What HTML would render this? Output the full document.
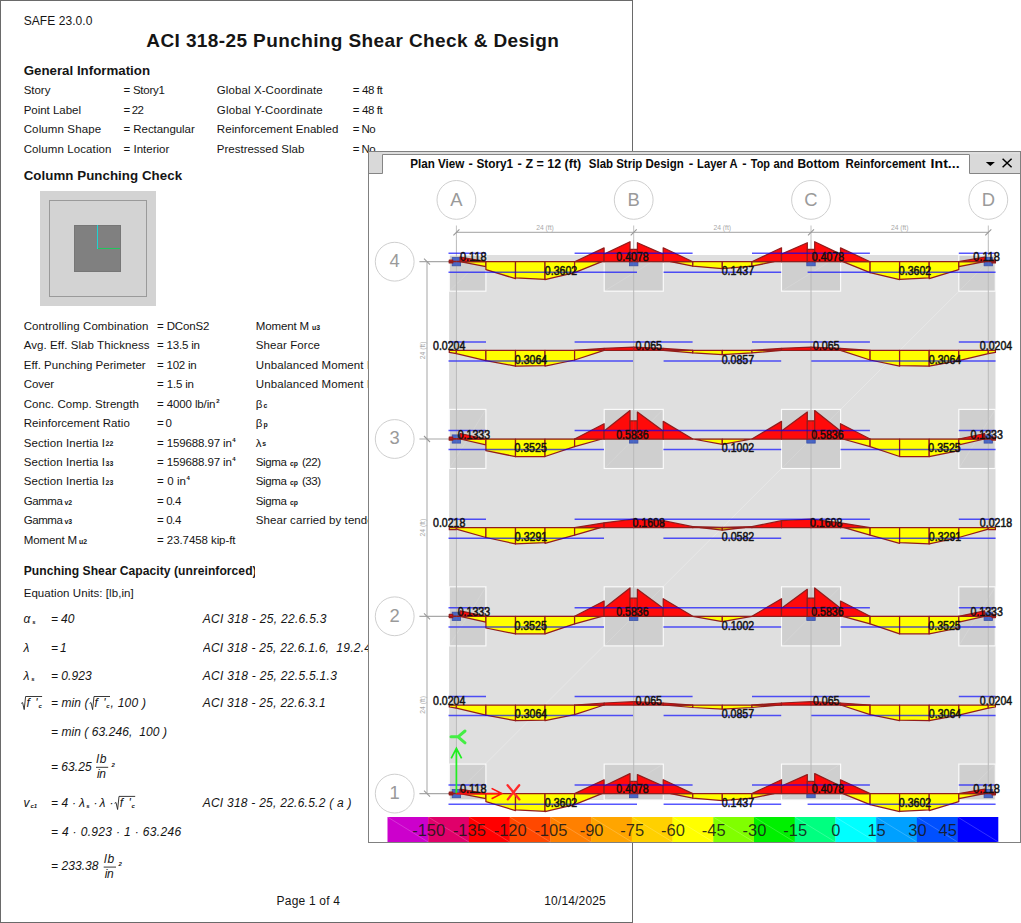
<!DOCTYPE html>
<html lang="en"><head><meta charset="utf-8"><title>ACI 318-25 Punching Shear Check &amp; Design</title>
<style>
html,body{margin:0;padding:0;background:#fff;}
body{width:1021px;height:923px;position:relative;overflow:hidden;font-family:"Liberation Sans", sans-serif;color:#111;}
#page{position:absolute;left:0;top:0;width:631px;height:921px;border:1px solid #6a6a6a;background:#fff;}
.t{position:absolute;white-space:pre;color:#151515;}
.abs{position:absolute;}
#win{position:absolute;left:368px;top:151px;width:651px;height:690px;border:1px solid #808080;background:#fff;}
svg{position:absolute;left:0;top:0;}
</style></head><body>
<div id="page"></div>
<div id="report" class="abs" style="left:0;top:0;width:633px;height:923px;">
<!-- column sketch -->
<div class="abs" style="left:40px;top:190.6px;width:115.6px;height:115.3px;background:#d3d3d3;"></div>
<div class="abs" style="left:48.6px;top:199.5px;width:98px;height:97.5px;border:1px solid #9a9a9a;box-sizing:border-box;"></div>
<div class="abs" style="left:74.4px;top:225.2px;width:46.6px;height:46.8px;background:#808080;border:1px solid #767676;box-sizing:border-box;"></div>
<div class="abs" style="left:97.3px;top:225.2px;width:1.2px;height:23.6px;background:#1fd3d3;"></div>
<div class="abs" style="left:97.8px;top:248px;width:22.2px;height:1.2px;background:#22c55e;"></div>
<span class="t" style="left:23.70px;top:14.24px;font-size:12px;line-height:15.6px;letter-spacing:0.065px;">SAFE 23.0.0</span>
<span class="t" style="left:146.30px;top:28.97px;font-size:19px;line-height:24.7px;font-weight:bold;letter-spacing:0.397px;">ACI 318-25 Punching Shear Check &amp; Design</span>
<span class="t" style="left:23.70px;top:62.05px;font-size:13.3px;line-height:17.29px;font-weight:bold;">General Information</span>
<span class="t" style="left:23.70px;top:83.14px;font-size:11.5px;line-height:14.95px;letter-spacing:-0.036px;">Story</span>
<span class="t" style="left:123.50px;top:83.14px;font-size:11.5px;line-height:14.95px;letter-spacing:-0.237px;">= Story1</span>
<span class="t" style="left:216.80px;top:83.14px;font-size:11.5px;line-height:14.95px;letter-spacing:0.094px;">Global X-Coordinate</span>
<span class="t" style="left:352.80px;top:83.14px;font-size:11.5px;line-height:14.95px;letter-spacing:-0.383px;">= 48 ft</span>
<span class="t" style="left:23.70px;top:102.64px;font-size:11.5px;line-height:14.95px;letter-spacing:-0.025px;">Point Label</span>
<span class="t" style="left:123.50px;top:102.64px;font-size:11.5px;line-height:14.95px;letter-spacing:-0.768px;">= 22</span>
<span class="t" style="left:216.80px;top:102.64px;font-size:11.5px;line-height:14.95px;letter-spacing:0.165px;">Global Y-Coordinate</span>
<span class="t" style="left:352.80px;top:102.64px;font-size:11.5px;line-height:14.95px;letter-spacing:-0.383px;">= 48 ft</span>
<span class="t" style="left:23.70px;top:122.14px;font-size:11.5px;line-height:14.95px;letter-spacing:0.120px;">Column Shape</span>
<span class="t" style="left:123.50px;top:122.14px;font-size:11.5px;line-height:14.95px;letter-spacing:-0.052px;">= Rectangular</span>
<span class="t" style="left:216.80px;top:122.14px;font-size:11.5px;line-height:14.95px;letter-spacing:0.066px;">Reinforcement Enabled</span>
<span class="t" style="left:352.80px;top:122.14px;font-size:11.5px;line-height:14.95px;letter-spacing:-0.575px;">= No</span>
<span class="t" style="left:23.70px;top:141.54px;font-size:11.5px;line-height:14.95px;letter-spacing:0.106px;">Column Location</span>
<span class="t" style="left:123.50px;top:141.54px;font-size:11.5px;line-height:14.95px;letter-spacing:0.011px;">= Interior</span>
<span class="t" style="left:216.80px;top:141.54px;font-size:11.5px;line-height:14.95px;">Prestressed Slab</span>
<span class="t" style="left:352.80px;top:141.54px;font-size:11.5px;line-height:14.95px;letter-spacing:-0.575px;">= No</span>
<span class="t" style="left:23.70px;top:167.35px;font-size:13.3px;line-height:17.29px;font-weight:bold;letter-spacing:0.052px;">Column Punching Check</span>
<span class="t" style="left:23.70px;top:318.84px;font-size:11.5px;line-height:14.95px;letter-spacing:0.094px;">Controlling Combination</span>
<span class="t" style="left:157.10px;top:318.84px;font-size:11.5px;line-height:14.95px;letter-spacing:-0.170px;">= DConS2</span>
<span class="t" style="left:23.70px;top:338.29px;font-size:11.5px;line-height:14.95px;letter-spacing:0.078px;">Avg. Eff. Slab Thickness</span>
<span class="t" style="left:157.10px;top:338.29px;font-size:11.5px;line-height:14.95px;letter-spacing:-0.207px;">= 13.5 in</span>
<span class="t" style="left:23.70px;top:357.74px;font-size:11.5px;line-height:14.95px;letter-spacing:0.034px;">Eff. Punching Perimeter</span>
<span class="t" style="left:157.10px;top:357.74px;font-size:11.5px;line-height:14.95px;letter-spacing:-0.250px;">= 102 in</span>
<span class="t" style="left:23.70px;top:377.19px;font-size:11.5px;line-height:14.95px;letter-spacing:-0.047px;">Cover</span>
<span class="t" style="left:157.10px;top:377.19px;font-size:11.5px;line-height:14.95px;letter-spacing:-0.164px;">= 1.5 in</span>
<span class="t" style="left:23.70px;top:396.64px;font-size:11.5px;line-height:14.95px;letter-spacing:0.080px;">Conc. Comp. Strength</span>
<span class="t" style="left:157.10px;top:396.64px;font-size:11.5px;line-height:14.95px;letter-spacing:-0.127px;">= 4000 lb/in</span>
<span class="t" style="left:23.70px;top:416.09px;font-size:11.5px;line-height:14.95px;letter-spacing:0.076px;">Reinforcement Ratio</span>
<span class="t" style="left:157.10px;top:416.09px;font-size:11.5px;line-height:14.95px;letter-spacing:-0.756px;">= 0</span>
<span class="t" style="left:23.70px;top:435.54px;font-size:11.5px;line-height:14.95px;letter-spacing:0.087px;">Section Inertia I</span>
<span class="t" style="left:105.60px;top:440.42px;font-size:6.9px;line-height:8.97px;font-weight:bold;">22</span>
<span class="t" style="left:157.10px;top:435.54px;font-size:11.5px;line-height:14.95px;letter-spacing:-0.132px;">= 159688.97 in</span>
<span class="t" style="left:23.70px;top:454.99px;font-size:11.5px;line-height:14.95px;letter-spacing:0.087px;">Section Inertia I</span>
<span class="t" style="left:105.60px;top:459.87px;font-size:6.9px;line-height:8.97px;font-weight:bold;">33</span>
<span class="t" style="left:157.10px;top:454.99px;font-size:11.5px;line-height:14.95px;letter-spacing:-0.132px;">= 159688.97 in</span>
<span class="t" style="left:23.70px;top:474.44px;font-size:11.5px;line-height:14.95px;letter-spacing:0.087px;">Section Inertia I</span>
<span class="t" style="left:105.60px;top:479.32px;font-size:6.9px;line-height:8.97px;font-weight:bold;">23</span>
<span class="t" style="left:157.10px;top:474.44px;font-size:11.5px;line-height:14.95px;letter-spacing:0.089px;">= 0 in</span>
<span class="t" style="left:23.70px;top:493.89px;font-size:11.5px;line-height:14.95px;letter-spacing:-0.427px;">Gamma</span>
<span class="t" style="left:64.50px;top:498.77px;font-size:6.9px;line-height:8.97px;font-weight:bold;">v2</span>
<span class="t" style="left:157.10px;top:493.89px;font-size:11.5px;line-height:14.95px;letter-spacing:-0.427px;">= 0.4</span>
<span class="t" style="left:23.70px;top:513.34px;font-size:11.5px;line-height:14.95px;letter-spacing:-0.427px;">Gamma</span>
<span class="t" style="left:64.50px;top:518.22px;font-size:6.9px;line-height:8.97px;font-weight:bold;">v3</span>
<span class="t" style="left:157.10px;top:513.34px;font-size:11.5px;line-height:14.95px;letter-spacing:-0.427px;">= 0.4</span>
<span class="t" style="left:23.70px;top:532.79px;font-size:11.5px;line-height:14.95px;letter-spacing:-0.118px;">Moment M</span>
<span class="t" style="left:79.00px;top:537.67px;font-size:6.9px;line-height:8.97px;font-weight:bold;">u2</span>
<span class="t" style="left:157.10px;top:532.79px;font-size:11.5px;line-height:14.95px;letter-spacing:-0.081px;">= 23.7458 kip-ft</span>
<span class="t" style="left:216.20px;top:397.62px;font-size:6px;line-height:7.8px;font-weight:bold;letter-spacing:-0.044px;">2</span>
<span class="t" style="left:232.30px;top:436.52px;font-size:6px;line-height:7.8px;font-weight:bold;letter-spacing:-0.144px;">4</span>
<span class="t" style="left:232.30px;top:455.97px;font-size:6px;line-height:7.8px;font-weight:bold;letter-spacing:-0.144px;">4</span>
<span class="t" style="left:186.50px;top:475.42px;font-size:6px;line-height:7.8px;font-weight:bold;letter-spacing:-0.144px;">4</span>
<span class="t" style="left:255.80px;top:318.84px;font-size:11.5px;line-height:14.95px;letter-spacing:-0.133px;">Moment M</span>
<span class="t" style="left:312.00px;top:323.72px;font-size:6.9px;line-height:8.97px;font-weight:bold;">u3</span>
<span class="t" style="left:255.80px;top:338.29px;font-size:11.5px;line-height:14.95px;letter-spacing:0.092px;">Shear Force</span>
<span class="t" style="left:255.80px;top:357.74px;font-size:11.5px;line-height:14.95px;letter-spacing:0.100px;width:112.20px;overflow:hidden;">Unbalanced Moment M</span>
<span class="t" style="left:255.80px;top:377.19px;font-size:11.5px;line-height:14.95px;letter-spacing:0.100px;width:112.20px;overflow:hidden;">Unbalanced Moment M</span>
<span class="t" style="left:255.80px;top:396.64px;font-size:11.5px;line-height:14.95px;letter-spacing:-0.425px;">β</span>
<span class="t" style="left:263.50px;top:401.52px;font-size:6.9px;line-height:8.97px;font-weight:bold;letter-spacing:-0.344px;">c</span>
<span class="t" style="left:255.80px;top:416.09px;font-size:11.5px;line-height:14.95px;letter-spacing:-0.425px;">β</span>
<span class="t" style="left:263.50px;top:420.97px;font-size:6.9px;line-height:8.97px;font-weight:bold;letter-spacing:-0.419px;">p</span>
<span class="t" style="left:255.80px;top:435.54px;font-size:11.5px;line-height:14.95px;letter-spacing:-0.050px;">λ</span>
<span class="t" style="left:262.30px;top:440.42px;font-size:6.9px;line-height:8.97px;font-weight:bold;letter-spacing:-0.344px;">s</span>
<span class="t" style="left:255.80px;top:454.99px;font-size:11.5px;line-height:14.95px;letter-spacing:-0.352px;">Sigma</span>
<span class="t" style="left:290.00px;top:459.87px;font-size:6.9px;line-height:8.97px;font-weight:bold;">cp</span>
<span class="t" style="left:302.00px;top:454.99px;font-size:11.5px;line-height:14.95px;letter-spacing:-0.484px;">(22)</span>
<span class="t" style="left:255.80px;top:474.44px;font-size:11.5px;line-height:14.95px;letter-spacing:-0.352px;">Sigma</span>
<span class="t" style="left:290.00px;top:479.32px;font-size:6.9px;line-height:8.97px;font-weight:bold;">cp</span>
<span class="t" style="left:302.00px;top:474.44px;font-size:11.5px;line-height:14.95px;letter-spacing:-0.484px;">(33)</span>
<span class="t" style="left:255.80px;top:493.89px;font-size:11.5px;line-height:14.95px;letter-spacing:-0.352px;">Sigma</span>
<span class="t" style="left:290.00px;top:498.77px;font-size:6.9px;line-height:8.97px;font-weight:bold;">cp</span>
<span class="t" style="left:255.80px;top:513.34px;font-size:11.5px;line-height:14.95px;letter-spacing:0.074px;width:112.20px;overflow:hidden;">Shear carried by tendons</span>
<span class="t" style="left:23.70px;top:564.04px;font-size:12.1px;line-height:15.73px;font-weight:bold;letter-spacing:0.047px;width:231.50px;overflow:hidden;">Punching Shear Capacity (unreinforced)</span>
<span class="t" style="left:23.70px;top:586.24px;font-size:11.5px;line-height:14.95px;letter-spacing:0.060px;">Equation Units: [lb,in]</span>
<span class="t" style="left:23.50px;top:612.24px;font-size:12px;line-height:15.6px;font-style:italic;letter-spacing:0.156px;">α</span>
<span class="t" style="left:32.30px;top:618.72px;font-size:6px;line-height:7.8px;font-weight:bold;font-style:italic;letter-spacing:-0.444px;">s</span>
<span class="t" style="left:50.90px;top:612.24px;font-size:12px;line-height:15.6px;font-style:italic;letter-spacing:-0.068px;">= 40</span>
<span class="t" style="left:23.50px;top:641.14px;font-size:12px;line-height:15.6px;font-style:italic;letter-spacing:0.094px;">λ</span>
<span class="t" style="left:50.90px;top:641.14px;font-size:12px;line-height:15.6px;font-style:italic;letter-spacing:-0.658px;">= 1</span>
<span class="t" style="left:23.50px;top:669.04px;font-size:12px;line-height:15.6px;font-style:italic;letter-spacing:0.094px;">λ</span>
<span class="t" style="left:31.30px;top:675.52px;font-size:6px;line-height:7.8px;font-weight:bold;font-style:italic;letter-spacing:-0.444px;">s</span>
<span class="t" style="left:50.90px;top:669.04px;font-size:12px;line-height:15.6px;font-style:italic;letter-spacing:0.071px;">= 0.923</span>
<span class="t" style="left:26.60px;top:696.44px;font-size:12px;line-height:15.6px;font-style:italic;letter-spacing:1.016px;">f '</span>
<span class="t" style="left:38.60px;top:702.92px;font-size:6px;line-height:7.8px;font-weight:bold;font-style:italic;letter-spacing:-0.344px;">c</span>
<span class="t" style="left:50.90px;top:696.44px;font-size:12px;line-height:15.6px;font-style:italic;letter-spacing:0.097px;">= min (</span>
<span class="t" style="left:94.50px;top:696.44px;font-size:12px;line-height:15.6px;font-style:italic;letter-spacing:1.016px;">f '</span>
<span class="t" style="left:106.30px;top:702.92px;font-size:6px;line-height:7.8px;font-weight:bold;font-style:italic;letter-spacing:-0.344px;">c</span>
<span class="t" style="left:110.50px;top:696.44px;font-size:12px;line-height:15.6px;font-style:italic;letter-spacing:0.245px;">, 100 )</span>
<span class="t" style="left:50.90px;top:724.84px;font-size:12px;line-height:15.6px;font-style:italic;letter-spacing:0.076px;">= min ( 63.246,  100 )</span>
<span class="t" style="left:50.90px;top:759.54px;font-size:12px;line-height:15.6px;font-style:italic;letter-spacing:0.071px;">= 63.25</span>
<span class="t" style="left:96.30px;top:751.84px;font-size:12px;line-height:15.6px;font-style:italic;letter-spacing:0.856px;">lb</span>
<span class="t" style="left:97.00px;top:766.94px;font-size:12px;line-height:15.6px;font-style:italic;letter-spacing:-0.344px;">in</span>
<span class="t" style="left:111.50px;top:761.52px;font-size:6px;line-height:7.8px;font-weight:bold;font-style:italic;letter-spacing:-0.244px;">2</span>
<span class="t" style="left:23.50px;top:796.34px;font-size:12px;line-height:15.6px;font-style:italic;letter-spacing:-0.200px;">v</span>
<span class="t" style="left:30.50px;top:802.82px;font-size:6px;line-height:7.8px;font-weight:bold;font-style:italic;">c1</span>
<span class="t" style="left:50.90px;top:796.34px;font-size:12px;line-height:15.6px;font-style:italic;letter-spacing:0.185px;">= 4 ·</span>
<span class="t" style="left:79.00px;top:796.34px;font-size:12px;line-height:15.6px;font-style:italic;letter-spacing:0.094px;">λ</span>
<span class="t" style="left:86.30px;top:802.82px;font-size:6px;line-height:7.8px;font-weight:bold;font-style:italic;letter-spacing:-0.444px;">s</span>
<span class="t" style="left:93.50px;top:796.34px;font-size:12px;line-height:15.6px;font-style:italic;letter-spacing:-1.500px;">·</span>
<span class="t" style="left:99.50px;top:796.34px;font-size:12px;line-height:15.6px;font-style:italic;letter-spacing:0.094px;">λ</span>
<span class="t" style="left:109.50px;top:796.34px;font-size:12px;line-height:15.6px;font-style:italic;letter-spacing:-1.500px;">·</span>
<span class="t" style="left:119.80px;top:796.34px;font-size:12px;line-height:15.6px;font-style:italic;letter-spacing:1.016px;">f '</span>
<span class="t" style="left:131.60px;top:802.82px;font-size:6px;line-height:7.8px;font-weight:bold;font-style:italic;letter-spacing:-0.344px;">c</span>
<span class="t" style="left:50.90px;top:825.34px;font-size:12px;line-height:15.6px;font-style:italic;letter-spacing:0.343px;">= 4 · 0.923 · 1 · 63.246</span>
<span class="t" style="left:50.90px;top:859.04px;font-size:12px;line-height:15.6px;font-style:italic;letter-spacing:0.079px;">= 233.38</span>
<span class="t" style="left:104.00px;top:851.74px;font-size:12px;line-height:15.6px;font-style:italic;letter-spacing:0.856px;">lb</span>
<span class="t" style="left:104.70px;top:867.04px;font-size:12px;line-height:15.6px;font-style:italic;letter-spacing:-0.344px;">in</span>
<span class="t" style="left:118.40px;top:861.32px;font-size:6px;line-height:7.8px;font-weight:bold;font-style:italic;letter-spacing:-0.244px;">2</span>
<span class="t" style="left:202.70px;top:612.24px;font-size:12px;line-height:15.6px;font-style:italic;letter-spacing:0.304px;">ACI 318 - 25, 22.6.5.3</span>
<span class="t" style="left:202.70px;top:641.14px;font-size:12px;line-height:15.6px;font-style:italic;letter-spacing:0.250px;width:165.30px;overflow:hidden;">ACI 318 - 25, 22.6.1.6,  19.2.4.1</span>
<span class="t" style="left:202.70px;top:669.04px;font-size:12px;line-height:15.6px;font-style:italic;letter-spacing:0.295px;">ACI 318 - 25, 22.5.5.1.3</span>
<span class="t" style="left:202.70px;top:696.44px;font-size:12px;line-height:15.6px;font-style:italic;letter-spacing:0.261px;">ACI 318 - 25, 22.6.3.1</span>
<span class="t" style="left:202.70px;top:796.34px;font-size:12px;line-height:15.6px;font-style:italic;letter-spacing:0.249px;">ACI 318 - 25, 22.6.5.2 ( a )</span>
<span class="t" style="left:276.60px;top:893.84px;font-size:12px;line-height:15.6px;letter-spacing:0.201px;">Page 1 of 4</span>
<span class="t" style="left:544.20px;top:894.14px;font-size:12px;line-height:15.6px;letter-spacing:0.171px;">10/14/2025</span>
<!-- radicals and fraction bars -->
<svg width="633" height="923" viewBox="0 0 633 923" style="pointer-events:none">
<g fill="none" stroke="#222" stroke-width="0.9">
<path d="M21.2 703.4 L22.6 702.6 L24.2 709.6 L25.6 696.5 L42.1 696.5"/>
<path d="M89.6 703.4 L91 702.6 L92.6 709.6 L94 696.5 L110 696.5"/>
<path d="M114.6 803.3 L116 802.5 L117.6 809.5 L119 796.4 L135.2 796.4"/>
<path d="M96 767.3 H108.2"/>
<path d="M103.7 867.1 H116"/>
</g></svg>
</div>
<div id="win"></div>
<svg width="1021" height="923" viewBox="0 0 1021 923" font-family="'Liberation Sans', sans-serif">
<rect x="369" y="152" width="651" height="2" fill="#dedede"/>
<rect x="369" y="152" width="13.5" height="21.5" fill="#d9d9d9"/>
<path d="M369 173.5 H382.5 V154.5 H969.5 V173.5 H1020" fill="none" stroke="#858585" stroke-width="1"/>
<rect x="970" y="154" width="50" height="19" fill="#d9d9d9"/>
<g font-size="12.2" font-weight="bold" fill="#0a0a0a">
<text x="410.2" y="167.6" textLength="54.1" lengthAdjust="spacingAndGlyphs">Plan View</text>
<text x="468.6" y="167.6" textLength="4.3" lengthAdjust="spacingAndGlyphs">-</text>
<text x="476.4" y="167.6" textLength="36.8" lengthAdjust="spacingAndGlyphs">Story1</text>
<text x="517.5" y="167.6" textLength="4.3" lengthAdjust="spacingAndGlyphs">-</text>
<text x="525.4" y="167.6" textLength="55.8" lengthAdjust="spacingAndGlyphs">Z = 12 (ft)</text>
<text x="588.8" y="167.6" textLength="95.0" lengthAdjust="spacingAndGlyphs">Slab Strip Design</text>
<text x="688.7" y="167.6" textLength="4.5" lengthAdjust="spacingAndGlyphs">-</text>
<text x="697.1" y="167.6" textLength="40.6" lengthAdjust="spacingAndGlyphs">Layer A</text>
<text x="742.2" y="167.6" textLength="4.3" lengthAdjust="spacingAndGlyphs">-</text>
<text x="750.8" y="167.6" textLength="19.2" lengthAdjust="spacingAndGlyphs">Top</text>
<text x="773.5" y="167.6" textLength="20.0" lengthAdjust="spacingAndGlyphs">and</text>
<text x="797.4" y="167.6" textLength="42.1" lengthAdjust="spacingAndGlyphs">Bottom</text>
<text x="845.4" y="167.6" textLength="80.3" lengthAdjust="spacingAndGlyphs">Reinforcement</text>
<text x="930.6" y="167.6" textLength="29.0" lengthAdjust="spacingAndGlyphs">Int...</text>
</g>
<polygon points="985.8,162 994.9,162 990.35,166" fill="#000"/>
<path d="M1002.6 158.8 L1011.6 167.2 M1011.6 158.8 L1002.6 167.2" stroke="#000" stroke-width="1.5" fill="none"/>
<circle cx="456.4" cy="199.9" r="19.4" fill="#fff" stroke="#cfcfcf" stroke-width="1"/>
<text x="456.4" y="205.6" font-size="18.4" fill="#9a9a9a" text-anchor="middle">A</text>
<circle cx="633.7" cy="199.9" r="19.4" fill="#fff" stroke="#cfcfcf" stroke-width="1"/>
<text x="633.7" y="205.6" font-size="18.4" fill="#9a9a9a" text-anchor="middle">B</text>
<circle cx="811.0" cy="199.9" r="19.4" fill="#fff" stroke="#cfcfcf" stroke-width="1"/>
<text x="811.0" y="205.6" font-size="18.4" fill="#9a9a9a" text-anchor="middle">C</text>
<circle cx="988.3" cy="199.9" r="19.4" fill="#fff" stroke="#cfcfcf" stroke-width="1"/>
<text x="988.3" y="205.6" font-size="18.4" fill="#9a9a9a" text-anchor="middle">D</text>
<circle cx="394.7" cy="261.7" r="19.4" fill="#fff" stroke="#cfcfcf" stroke-width="1"/>
<text x="394.7" y="267.1" font-size="18.4" fill="#9a9a9a" text-anchor="middle">4</text>
<circle cx="394.7" cy="439.0" r="19.4" fill="#fff" stroke="#cfcfcf" stroke-width="1"/>
<text x="394.7" y="444.4" font-size="18.4" fill="#9a9a9a" text-anchor="middle">3</text>
<circle cx="394.7" cy="616.3" r="19.4" fill="#fff" stroke="#cfcfcf" stroke-width="1"/>
<text x="394.7" y="621.7" font-size="18.4" fill="#9a9a9a" text-anchor="middle">2</text>
<circle cx="394.7" cy="793.6" r="19.4" fill="#fff" stroke="#cfcfcf" stroke-width="1"/>
<text x="394.7" y="799.0" font-size="18.4" fill="#9a9a9a" text-anchor="middle">1</text>
<rect x="449.3" y="255.0" width="546.0" height="545.0" fill="#dfdfdf"/>
<rect x="449.3" y="255.0" width="7.1" height="545.0" fill="#dadada"/>
<rect x="988.3" y="255.0" width="7.0" height="545.0" fill="#dadada"/>
<line x1="995.3" y1="255.0" x2="449.3" y2="800.0" stroke="#fff" stroke-opacity="0.28" stroke-width="1"/>
<rect x="449.3" y="255.0" width="36.6" height="36.2" fill="#cfcfcf" stroke="#fbfbfb" stroke-width="1.15"/>
<line x1="485.9" y1="255.0" x2="449.3" y2="291.2" stroke="#fff" stroke-opacity="0.16" stroke-width="0.8"/>
<rect x="449.3" y="409.4" width="36.6" height="59.1" fill="#cfcfcf" stroke="#fbfbfb" stroke-width="1.15"/>
<line x1="485.9" y1="409.4" x2="449.3" y2="468.6" stroke="#fff" stroke-opacity="0.16" stroke-width="0.8"/>
<rect x="449.3" y="586.8" width="36.6" height="59.1" fill="#cfcfcf" stroke="#fbfbfb" stroke-width="1.15"/>
<line x1="485.9" y1="586.8" x2="449.3" y2="645.8" stroke="#fff" stroke-opacity="0.16" stroke-width="0.8"/>
<rect x="449.3" y="764.1" width="36.6" height="35.9" fill="#cfcfcf" stroke="#fbfbfb" stroke-width="1.15"/>
<line x1="485.9" y1="764.1" x2="449.3" y2="800.0" stroke="#fff" stroke-opacity="0.16" stroke-width="0.8"/>
<rect x="604.2" y="255.0" width="59.1" height="36.2" fill="#cfcfcf" stroke="#fbfbfb" stroke-width="1.15"/>
<line x1="663.2" y1="255.0" x2="604.2" y2="291.2" stroke="#fff" stroke-opacity="0.16" stroke-width="0.8"/>
<rect x="604.2" y="409.4" width="59.1" height="59.1" fill="#cfcfcf" stroke="#fbfbfb" stroke-width="1.15"/>
<line x1="663.2" y1="409.4" x2="604.2" y2="468.6" stroke="#fff" stroke-opacity="0.16" stroke-width="0.8"/>
<rect x="604.2" y="586.8" width="59.1" height="59.1" fill="#cfcfcf" stroke="#fbfbfb" stroke-width="1.15"/>
<line x1="663.2" y1="586.8" x2="604.2" y2="645.8" stroke="#fff" stroke-opacity="0.16" stroke-width="0.8"/>
<rect x="604.2" y="764.1" width="59.1" height="35.9" fill="#cfcfcf" stroke="#fbfbfb" stroke-width="1.15"/>
<line x1="663.2" y1="764.1" x2="604.2" y2="800.0" stroke="#fff" stroke-opacity="0.16" stroke-width="0.8"/>
<rect x="781.5" y="255.0" width="59.1" height="36.2" fill="#cfcfcf" stroke="#fbfbfb" stroke-width="1.15"/>
<line x1="840.5" y1="255.0" x2="781.5" y2="291.2" stroke="#fff" stroke-opacity="0.16" stroke-width="0.8"/>
<rect x="781.5" y="409.4" width="59.1" height="59.1" fill="#cfcfcf" stroke="#fbfbfb" stroke-width="1.15"/>
<line x1="840.5" y1="409.4" x2="781.5" y2="468.6" stroke="#fff" stroke-opacity="0.16" stroke-width="0.8"/>
<rect x="781.5" y="586.8" width="59.1" height="59.1" fill="#cfcfcf" stroke="#fbfbfb" stroke-width="1.15"/>
<line x1="840.5" y1="586.8" x2="781.5" y2="645.8" stroke="#fff" stroke-opacity="0.16" stroke-width="0.8"/>
<rect x="781.5" y="764.1" width="59.1" height="35.9" fill="#cfcfcf" stroke="#fbfbfb" stroke-width="1.15"/>
<line x1="840.5" y1="764.1" x2="781.5" y2="800.0" stroke="#fff" stroke-opacity="0.16" stroke-width="0.8"/>
<rect x="958.8" y="255.0" width="36.5" height="36.2" fill="#cfcfcf" stroke="#fbfbfb" stroke-width="1.15"/>
<line x1="995.3" y1="255.0" x2="958.8" y2="291.2" stroke="#fff" stroke-opacity="0.16" stroke-width="0.8"/>
<rect x="958.8" y="409.4" width="36.5" height="59.1" fill="#cfcfcf" stroke="#fbfbfb" stroke-width="1.15"/>
<line x1="995.3" y1="409.4" x2="958.8" y2="468.6" stroke="#fff" stroke-opacity="0.16" stroke-width="0.8"/>
<rect x="958.8" y="586.8" width="36.5" height="59.1" fill="#cfcfcf" stroke="#fbfbfb" stroke-width="1.15"/>
<line x1="995.3" y1="586.8" x2="958.8" y2="645.8" stroke="#fff" stroke-opacity="0.16" stroke-width="0.8"/>
<rect x="958.8" y="764.1" width="36.5" height="35.9" fill="#cfcfcf" stroke="#fbfbfb" stroke-width="1.15"/>
<line x1="995.3" y1="764.1" x2="958.8" y2="800.0" stroke="#fff" stroke-opacity="0.16" stroke-width="0.8"/>
<line x1="456.4" y1="225.5" x2="456.4" y2="793.6" stroke="#c2c2c2" stroke-width="1"/>
<line x1="633.7" y1="225.5" x2="633.7" y2="793.6" stroke="#c2c2c2" stroke-width="1"/>
<line x1="811.0" y1="225.5" x2="811.0" y2="793.6" stroke="#c2c2c2" stroke-width="1"/>
<line x1="988.3" y1="225.5" x2="988.3" y2="793.6" stroke="#c2c2c2" stroke-width="1"/>
<line x1="419.4" y1="261.7" x2="988.3" y2="261.7" stroke="#a8a8a8" stroke-width="1.2"/>
<line x1="419.4" y1="439.0" x2="988.3" y2="439.0" stroke="#a8a8a8" stroke-width="1.2"/>
<line x1="419.4" y1="616.3" x2="988.3" y2="616.3" stroke="#a8a8a8" stroke-width="1.2"/>
<line x1="419.4" y1="793.6" x2="988.3" y2="793.6" stroke="#a8a8a8" stroke-width="1.2"/>
<line x1="456.4" y1="232.3" x2="988.3" y2="232.3" stroke="#b4b4b4" stroke-width="1.2"/>
<line x1="427" y1="261.7" x2="427" y2="793.6" stroke="#b4b4b4" stroke-width="1.2"/>
<line x1="453.4" y1="235.3" x2="459.4" y2="229.3" stroke="#989898" stroke-width="1.1"/>
<line x1="424" y1="258.7" x2="430" y2="264.7" stroke="#989898" stroke-width="1.1"/>
<line x1="630.7" y1="235.3" x2="636.7" y2="229.3" stroke="#989898" stroke-width="1.1"/>
<line x1="424" y1="436.0" x2="430" y2="442.0" stroke="#989898" stroke-width="1.1"/>
<line x1="808.0" y1="235.3" x2="814.0" y2="229.3" stroke="#989898" stroke-width="1.1"/>
<line x1="424" y1="613.3" x2="430" y2="619.3" stroke="#989898" stroke-width="1.1"/>
<line x1="985.3" y1="235.3" x2="991.3" y2="229.3" stroke="#989898" stroke-width="1.1"/>
<line x1="424" y1="790.6" x2="430" y2="796.6" stroke="#989898" stroke-width="1.1"/>
<text x="536.2" y="230.1" font-size="7.5" fill="#a8a8a8" textLength="17.6" lengthAdjust="spacingAndGlyphs">24 (ft)</text>
<text transform="translate(424.6 359.2) rotate(-90)" font-size="7.5" fill="#a8a8a8" textLength="17.6" lengthAdjust="spacingAndGlyphs">24 (ft)</text>
<text x="713.5" y="230.1" font-size="7.5" fill="#a8a8a8" textLength="17.6" lengthAdjust="spacingAndGlyphs">24 (ft)</text>
<text transform="translate(424.6 536.4) rotate(-90)" font-size="7.5" fill="#a8a8a8" textLength="17.6" lengthAdjust="spacingAndGlyphs">24 (ft)</text>
<text x="890.9" y="230.1" font-size="7.5" fill="#a8a8a8" textLength="17.6" lengthAdjust="spacingAndGlyphs">24 (ft)</text>
<text transform="translate(424.6 713.7) rotate(-90)" font-size="7.5" fill="#a8a8a8" textLength="17.6" lengthAdjust="spacingAndGlyphs">24 (ft)</text>
<rect x="452.2" y="257.6" width="8.4" height="8.2" fill="#4866c6" stroke="#3a50a8" stroke-width="0.8"/>
<rect x="629.5" y="257.6" width="8.4" height="8.2" fill="#4866c6" stroke="#3a50a8" stroke-width="0.8"/>
<rect x="806.8" y="257.6" width="8.4" height="8.2" fill="#4866c6" stroke="#3a50a8" stroke-width="0.8"/>
<rect x="984.1" y="257.6" width="8.4" height="8.2" fill="#4866c6" stroke="#3a50a8" stroke-width="0.8"/>
<g stroke="#921c1c" stroke-width="1.25" stroke-linejoin="round">
<polygon points="449.3,261.7 449.3,262.9 452.7,262.9 452.7,261.7" fill="#ffff00"/>
<polygon points="460.1,261.7 460.1,261.7 485.9,266.7 485.9,261.7" fill="#ffff00"/>
<polygon points="485.9,261.7 485.9,269.7 515.5,278.7 515.5,261.7" fill="#ffff00"/>
<polygon points="515.5,261.7 515.5,277.9 545.0,279.4 545.0,261.7" fill="#ffff00"/>
<polygon points="545.0,261.7 545.0,279.7 574.6,272.7 574.6,261.7" fill="#ffff00"/>
<polygon points="574.6,261.7 574.6,272.7 601.9,261.7 601.9,261.7" fill="#ffff00"/>
<polygon points="670.6,261.7 670.6,261.7 692.8,266.2 692.8,261.7" fill="#ffff00"/>
<polygon points="692.8,261.7 692.8,266.2 722.3,268.7 722.3,261.7" fill="#ffff00"/>
<polygon points="722.3,261.7 722.3,268.7 751.9,266.2 751.9,261.7" fill="#ffff00"/>
<polygon points="751.9,261.7 751.9,266.2 774.1,261.7 774.1,261.7" fill="#ffff00"/>
<polygon points="842.8,261.7 842.8,261.7 870.1,272.7 870.1,261.7" fill="#ffff00"/>
<polygon points="870.1,261.7 870.1,272.7 899.6,279.7 899.6,261.7" fill="#ffff00"/>
<polygon points="899.6,261.7 899.6,279.4 929.2,277.9 929.2,261.7" fill="#ffff00"/>
<polygon points="929.2,261.7 929.2,278.7 958.8,269.7 958.8,261.7" fill="#ffff00"/>
<polygon points="958.8,261.7 958.8,266.7 984.6,261.7 984.6,261.7" fill="#ffff00"/>
<polygon points="992.0,261.7 992.0,262.9 995.4,262.9 995.4,261.7" fill="#ffff00"/>
<polygon points="449.3,261.7 449.3,260.1 452.7,260.1 452.7,261.7" fill="#ff0a0a"/>
<polygon points="452.7,261.7 452.7,261.4 460.1,261.4 460.1,261.7" fill="#ff0a0a"/>
<polygon points="460.1,261.7 460.1,257.2 485.9,261.7 485.9,261.7" fill="#ff0a0a"/>
<polygon points="574.6,261.7 574.6,261.7 604.1,247.9 604.1,261.7" fill="#ff0a0a"/>
<polygon points="604.1,261.7 604.1,254.1 630.0,241.7 630.0,261.7" fill="#ff0a0a"/>
<polygon points="630.0,261.7 630.0,249.4 637.4,249.4 637.4,261.7" fill="#ff0a0a"/>
<polygon points="637.4,261.7 637.4,242.7 663.2,254.1 663.2,261.7" fill="#ff0a0a"/>
<polygon points="663.2,261.7 663.2,247.8 692.8,261.7 692.8,261.7" fill="#ff0a0a"/>
<polygon points="751.9,261.7 751.9,261.7 781.5,247.8 781.5,261.7" fill="#ff0a0a"/>
<polygon points="781.5,261.7 781.5,254.1 807.3,242.7 807.3,261.7" fill="#ff0a0a"/>
<polygon points="807.3,261.7 807.3,249.4 814.7,249.4 814.7,261.7" fill="#ff0a0a"/>
<polygon points="814.7,261.7 814.7,241.7 840.5,254.1 840.5,261.7" fill="#ff0a0a"/>
<polygon points="840.5,261.7 840.5,247.9 870.1,261.7 870.1,261.7" fill="#ff0a0a"/>
<polygon points="958.8,261.7 958.8,261.7 984.6,257.2 984.6,261.7" fill="#ff0a0a"/>
<polygon points="984.6,261.7 984.6,261.4 992.0,261.4 992.0,261.7" fill="#ff0a0a"/>
<polygon points="992.0,261.7 992.0,260.1 995.4,260.1 995.4,261.7" fill="#ff0a0a"/>
</g>
<line x1="448.5" y1="253.2" x2="486.0" y2="253.2" stroke="#0000ff" stroke-opacity="0.66" stroke-width="1.5"/>
<line x1="574.6" y1="253.2" x2="692.6" y2="253.2" stroke="#0000ff" stroke-opacity="0.66" stroke-width="1.5"/>
<line x1="752.0" y1="253.2" x2="869.9" y2="253.2" stroke="#0000ff" stroke-opacity="0.66" stroke-width="1.5"/>
<line x1="958.8" y1="253.2" x2="995.6" y2="253.2" stroke="#0000ff" stroke-opacity="0.66" stroke-width="1.5"/>
<line x1="448.5" y1="272.3" x2="637.0" y2="272.3" stroke="#0000ff" stroke-opacity="0.66" stroke-width="1.5"/>
<line x1="663.6" y1="272.3" x2="781.2" y2="272.3" stroke="#0000ff" stroke-opacity="0.66" stroke-width="1.5"/>
<line x1="807.6" y1="272.3" x2="995.6" y2="272.3" stroke="#0000ff" stroke-opacity="0.66" stroke-width="1.5"/>
<g stroke="#921c1c" stroke-width="1.25" stroke-linejoin="round">
<polygon points="449.3,350.4 449.3,352.4 456.4,353.6 456.4,350.4" fill="#ffff00"/>
<polygon points="456.4,350.4 456.4,353.6 485.9,360.6 485.9,350.4" fill="#ffff00"/>
<polygon points="485.9,350.4 485.9,360.6 515.5,366.1 515.5,350.4" fill="#ffff00"/>
<polygon points="515.5,350.4 515.5,366.1 545.0,365.7 545.0,350.4" fill="#ffff00"/>
<polygon points="545.0,350.4 545.0,366.1 574.6,360.0 574.6,350.4" fill="#ffff00"/>
<polygon points="574.6,350.4 574.6,360.0 604.1,350.4 604.1,350.4" fill="#ffff00"/>
<polygon points="663.2,350.4 663.2,350.4 692.8,352.9 692.8,350.4" fill="#ffff00"/>
<polygon points="692.8,350.4 692.8,352.9 722.3,354.7 722.3,350.4" fill="#ffff00"/>
<polygon points="722.3,350.4 722.3,354.7 751.9,352.9 751.9,350.4" fill="#ffff00"/>
<polygon points="751.9,350.4 751.9,352.9 781.5,350.4 781.5,350.4" fill="#ffff00"/>
<polygon points="840.5,350.4 840.5,350.4 870.1,360.0 870.1,350.4" fill="#ffff00"/>
<polygon points="870.1,350.4 870.1,360.0 899.6,366.1 899.6,350.4" fill="#ffff00"/>
<polygon points="899.6,350.4 899.6,365.7 929.2,366.1 929.2,350.4" fill="#ffff00"/>
<polygon points="929.2,350.4 929.2,366.1 958.8,360.6 958.8,350.4" fill="#ffff00"/>
<polygon points="958.8,350.4 958.8,360.6 988.3,353.6 988.3,350.4" fill="#ffff00"/>
<polygon points="988.3,350.4 988.3,353.6 995.4,352.4 995.4,350.4" fill="#ffff00"/>
<polygon points="574.6,350.4 574.6,350.4 604.1,348.4 604.1,350.4" fill="#ff0a0a"/>
<polygon points="604.1,350.4 604.1,348.4 633.7,347.1 633.7,350.4" fill="#ff0a0a"/>
<polygon points="633.7,350.4 633.7,347.1 663.2,348.4 663.2,350.4" fill="#ff0a0a"/>
<polygon points="663.2,350.4 663.2,348.4 692.8,350.4 692.8,350.4" fill="#ff0a0a"/>
<polygon points="751.9,350.4 751.9,350.4 781.5,348.4 781.5,350.4" fill="#ff0a0a"/>
<polygon points="781.5,350.4 781.5,348.4 811.0,347.1 811.0,350.4" fill="#ff0a0a"/>
<polygon points="811.0,350.4 811.0,347.1 840.5,348.4 840.5,350.4" fill="#ff0a0a"/>
<polygon points="840.5,350.4 840.5,348.4 870.1,350.4 870.1,350.4" fill="#ff0a0a"/>
</g>
<line x1="448.5" y1="341.9" x2="486.0" y2="341.9" stroke="#0000ff" stroke-opacity="0.66" stroke-width="1.5"/>
<line x1="574.6" y1="341.9" x2="692.6" y2="341.9" stroke="#0000ff" stroke-opacity="0.66" stroke-width="1.5"/>
<line x1="752.0" y1="341.9" x2="869.9" y2="341.9" stroke="#0000ff" stroke-opacity="0.66" stroke-width="1.5"/>
<line x1="958.8" y1="341.9" x2="995.6" y2="341.9" stroke="#0000ff" stroke-opacity="0.66" stroke-width="1.5"/>
<line x1="448.5" y1="361.0" x2="633.0" y2="361.0" stroke="#0000ff" stroke-opacity="0.66" stroke-width="1.5"/>
<line x1="663.6" y1="361.0" x2="781.2" y2="361.0" stroke="#0000ff" stroke-opacity="0.66" stroke-width="1.5"/>
<line x1="811.3" y1="361.0" x2="995.6" y2="361.0" stroke="#0000ff" stroke-opacity="0.66" stroke-width="1.5"/>
<rect x="452.2" y="434.9" width="8.4" height="8.2" fill="#4866c6" stroke="#3a50a8" stroke-width="0.8"/>
<rect x="629.5" y="434.9" width="8.4" height="8.2" fill="#4866c6" stroke="#3a50a8" stroke-width="0.8"/>
<rect x="806.8" y="434.9" width="8.4" height="8.2" fill="#4866c6" stroke="#3a50a8" stroke-width="0.8"/>
<rect x="984.1" y="434.9" width="8.4" height="8.2" fill="#4866c6" stroke="#3a50a8" stroke-width="0.8"/>
<g stroke="#921c1c" stroke-width="1.25" stroke-linejoin="round">
<polygon points="449.3,439.0 449.3,440.2 452.7,440.2 452.7,439.0" fill="#ffff00"/>
<polygon points="460.1,439.0 460.1,439.0 485.9,444.9 485.9,439.0" fill="#ffff00"/>
<polygon points="485.9,439.0 485.9,450.7 515.5,456.6 515.5,439.0" fill="#ffff00"/>
<polygon points="515.5,439.0 515.5,456.5 545.0,456.5 545.0,439.0" fill="#ffff00"/>
<polygon points="545.0,439.0 545.0,456.5 574.6,446.6 574.6,439.0" fill="#ffff00"/>
<polygon points="574.6,439.0 574.6,446.6 601.9,439.0 601.9,439.0" fill="#ffff00"/>
<polygon points="692.8,439.0 692.8,439.0 722.3,444.3 722.3,439.0" fill="#ffff00"/>
<polygon points="722.3,439.0 722.3,444.3 751.9,439.0 751.9,439.0" fill="#ffff00"/>
<polygon points="842.8,439.0 842.8,439.0 870.1,446.6 870.1,439.0" fill="#ffff00"/>
<polygon points="870.1,439.0 870.1,446.6 899.6,456.5 899.6,439.0" fill="#ffff00"/>
<polygon points="899.6,439.0 899.6,456.5 929.2,456.5 929.2,439.0" fill="#ffff00"/>
<polygon points="929.2,439.0 929.2,456.6 958.8,450.7 958.8,439.0" fill="#ffff00"/>
<polygon points="958.8,439.0 958.8,444.9 984.6,439.0 984.6,439.0" fill="#ffff00"/>
<polygon points="992.0,439.0 992.0,440.2 995.4,440.2 995.4,439.0" fill="#ffff00"/>
<polygon points="449.3,439.0 449.3,437.0 452.7,437.0 452.7,439.0" fill="#ff0a0a"/>
<polygon points="452.7,439.0 452.7,438.7 460.1,438.7 460.1,439.0" fill="#ff0a0a"/>
<polygon points="460.1,439.0 460.1,433.5 485.9,439.0 485.9,439.0" fill="#ff0a0a"/>
<polygon points="574.6,439.0 574.6,439.0 604.1,423.7 604.1,439.0" fill="#ff0a0a"/>
<polygon points="604.1,439.0 604.1,431.0 630.0,410.6 630.0,439.0" fill="#ff0a0a"/>
<polygon points="630.0,439.0 630.0,420.8 637.4,420.8 637.4,439.0" fill="#ff0a0a"/>
<polygon points="637.4,439.0 637.4,412.0 663.2,431.0 663.2,439.0" fill="#ff0a0a"/>
<polygon points="663.2,439.0 663.2,421.4 692.8,439.0 692.8,439.0" fill="#ff0a0a"/>
<polygon points="751.9,439.0 751.9,439.0 781.5,421.4 781.5,439.0" fill="#ff0a0a"/>
<polygon points="781.5,439.0 781.5,431.0 807.3,412.0 807.3,439.0" fill="#ff0a0a"/>
<polygon points="807.3,439.0 807.3,420.8 814.7,420.8 814.7,439.0" fill="#ff0a0a"/>
<polygon points="814.7,439.0 814.7,410.6 840.5,431.0 840.5,439.0" fill="#ff0a0a"/>
<polygon points="840.5,439.0 840.5,423.7 870.1,439.0 870.1,439.0" fill="#ff0a0a"/>
<polygon points="958.8,439.0 958.8,439.0 984.6,433.5 984.6,439.0" fill="#ff0a0a"/>
<polygon points="984.6,439.0 984.6,438.7 992.0,438.7 992.0,439.0" fill="#ff0a0a"/>
<polygon points="992.0,439.0 992.0,437.0 995.4,437.0 995.4,439.0" fill="#ff0a0a"/>
</g>
<line x1="448.5" y1="430.5" x2="486.0" y2="430.5" stroke="#0000ff" stroke-opacity="0.66" stroke-width="1.5"/>
<line x1="574.6" y1="430.5" x2="869.9" y2="430.5" stroke="#0000ff" stroke-opacity="0.66" stroke-width="1.5"/>
<line x1="958.8" y1="430.5" x2="995.6" y2="430.5" stroke="#0000ff" stroke-opacity="0.66" stroke-width="1.5"/>
<line x1="448.5" y1="449.6" x2="604.0" y2="449.6" stroke="#0000ff" stroke-opacity="0.66" stroke-width="1.5"/>
<line x1="663.4" y1="449.6" x2="781.2" y2="449.6" stroke="#0000ff" stroke-opacity="0.66" stroke-width="1.5"/>
<line x1="840.6" y1="449.6" x2="995.6" y2="449.6" stroke="#0000ff" stroke-opacity="0.66" stroke-width="1.5"/>
<g stroke="#921c1c" stroke-width="1.25" stroke-linejoin="round">
<polygon points="449.3,527.7 449.3,529.7 456.4,529.7 456.4,527.7" fill="#ffff00"/>
<polygon points="456.4,527.7 456.4,529.2 485.9,537.5 485.9,527.7" fill="#ffff00"/>
<polygon points="485.9,527.7 485.9,537.5 515.5,543.9 515.5,527.7" fill="#ffff00"/>
<polygon points="515.5,527.7 515.5,543.9 545.0,542.7 545.0,527.7" fill="#ffff00"/>
<polygon points="545.0,527.7 545.0,543.3 574.6,535.1 574.6,527.7" fill="#ffff00"/>
<polygon points="574.6,527.7 574.6,535.1 600.5,527.7 600.5,527.7" fill="#ffff00"/>
<polygon points="700.2,527.7 700.2,527.7 722.3,530.2 722.3,527.7" fill="#ffff00"/>
<polygon points="722.3,527.7 722.3,530.2 744.5,527.7 744.5,527.7" fill="#ffff00"/>
<polygon points="844.2,527.7 844.2,527.7 870.1,535.1 870.1,527.7" fill="#ffff00"/>
<polygon points="870.1,527.7 870.1,535.1 899.6,543.3 899.6,527.7" fill="#ffff00"/>
<polygon points="899.6,527.7 899.6,542.7 929.2,543.9 929.2,527.7" fill="#ffff00"/>
<polygon points="929.2,527.7 929.2,543.9 958.8,537.5 958.8,527.7" fill="#ffff00"/>
<polygon points="958.8,527.7 958.8,537.5 988.3,529.2 988.3,527.7" fill="#ffff00"/>
<polygon points="988.3,527.7 988.3,529.7 995.4,529.7 995.4,527.7" fill="#ffff00"/>
<polygon points="574.6,527.7 574.6,527.7 604.1,522.8 604.1,527.7" fill="#ff0a0a"/>
<polygon points="604.1,527.7 604.1,522.8 633.7,519.2 633.7,527.7" fill="#ff0a0a"/>
<polygon points="633.7,527.7 633.7,519.2 663.2,520.7 663.2,527.7" fill="#ff0a0a"/>
<polygon points="663.2,527.7 663.2,520.7 692.8,526.7 692.8,527.7" fill="#ff0a0a"/>
<polygon points="692.8,527.7 692.8,526.7 722.3,527.4 722.3,527.7" fill="#ff0a0a"/>
<polygon points="722.3,527.7 722.3,527.4 751.9,526.7 751.9,527.7" fill="#ff0a0a"/>
<polygon points="751.9,527.7 751.9,526.7 781.5,520.7 781.5,527.7" fill="#ff0a0a"/>
<polygon points="781.5,527.7 781.5,520.7 811.0,519.2 811.0,527.7" fill="#ff0a0a"/>
<polygon points="811.0,527.7 811.0,519.2 840.5,522.8 840.5,527.7" fill="#ff0a0a"/>
<polygon points="840.5,527.7 840.5,522.8 870.1,527.7 870.1,527.7" fill="#ff0a0a"/>
</g>
<line x1="448.5" y1="519.2" x2="486.0" y2="519.2" stroke="#0000ff" stroke-opacity="0.66" stroke-width="1.5"/>
<line x1="574.6" y1="519.2" x2="869.9" y2="519.2" stroke="#0000ff" stroke-opacity="0.66" stroke-width="1.5"/>
<line x1="958.8" y1="519.2" x2="995.6" y2="519.2" stroke="#0000ff" stroke-opacity="0.66" stroke-width="1.5"/>
<line x1="448.5" y1="538.3" x2="604.0" y2="538.3" stroke="#0000ff" stroke-opacity="0.66" stroke-width="1.5"/>
<line x1="663.4" y1="538.3" x2="781.2" y2="538.3" stroke="#0000ff" stroke-opacity="0.66" stroke-width="1.5"/>
<line x1="840.6" y1="538.3" x2="995.6" y2="538.3" stroke="#0000ff" stroke-opacity="0.66" stroke-width="1.5"/>
<rect x="452.2" y="612.2" width="8.4" height="8.2" fill="#4866c6" stroke="#3a50a8" stroke-width="0.8"/>
<rect x="629.5" y="612.2" width="8.4" height="8.2" fill="#4866c6" stroke="#3a50a8" stroke-width="0.8"/>
<rect x="806.8" y="612.2" width="8.4" height="8.2" fill="#4866c6" stroke="#3a50a8" stroke-width="0.8"/>
<rect x="984.1" y="612.2" width="8.4" height="8.2" fill="#4866c6" stroke="#3a50a8" stroke-width="0.8"/>
<g stroke="#921c1c" stroke-width="1.25" stroke-linejoin="round">
<polygon points="449.3,616.3 449.3,617.5 452.7,617.5 452.7,616.3" fill="#ffff00"/>
<polygon points="460.1,616.3 460.1,616.3 485.9,622.2 485.9,616.3" fill="#ffff00"/>
<polygon points="485.9,616.3 485.9,628.0 515.5,633.9 515.5,616.3" fill="#ffff00"/>
<polygon points="515.5,616.3 515.5,633.8 545.0,633.8 545.0,616.3" fill="#ffff00"/>
<polygon points="545.0,616.3 545.0,633.8 574.6,623.9 574.6,616.3" fill="#ffff00"/>
<polygon points="574.6,616.3 574.6,623.9 601.9,616.3 601.9,616.3" fill="#ffff00"/>
<polygon points="692.8,616.3 692.8,616.3 722.3,621.6 722.3,616.3" fill="#ffff00"/>
<polygon points="722.3,616.3 722.3,621.6 751.9,616.3 751.9,616.3" fill="#ffff00"/>
<polygon points="842.8,616.3 842.8,616.3 870.1,623.9 870.1,616.3" fill="#ffff00"/>
<polygon points="870.1,616.3 870.1,623.9 899.6,633.8 899.6,616.3" fill="#ffff00"/>
<polygon points="899.6,616.3 899.6,633.8 929.2,633.8 929.2,616.3" fill="#ffff00"/>
<polygon points="929.2,616.3 929.2,633.9 958.8,628.0 958.8,616.3" fill="#ffff00"/>
<polygon points="958.8,616.3 958.8,622.2 984.6,616.3 984.6,616.3" fill="#ffff00"/>
<polygon points="992.0,616.3 992.0,617.5 995.4,617.5 995.4,616.3" fill="#ffff00"/>
<polygon points="449.3,616.3 449.3,614.3 452.7,614.3 452.7,616.3" fill="#ff0a0a"/>
<polygon points="452.7,616.3 452.7,616.0 460.1,616.0 460.1,616.3" fill="#ff0a0a"/>
<polygon points="460.1,616.3 460.1,610.8 485.9,616.3 485.9,616.3" fill="#ff0a0a"/>
<polygon points="574.6,616.3 574.6,616.3 604.1,601.0 604.1,616.3" fill="#ff0a0a"/>
<polygon points="604.1,616.3 604.1,608.3 630.0,587.9 630.0,616.3" fill="#ff0a0a"/>
<polygon points="630.0,616.3 630.0,598.1 637.4,598.1 637.4,616.3" fill="#ff0a0a"/>
<polygon points="637.4,616.3 637.4,589.3 663.2,608.3 663.2,616.3" fill="#ff0a0a"/>
<polygon points="663.2,616.3 663.2,598.7 692.8,616.3 692.8,616.3" fill="#ff0a0a"/>
<polygon points="751.9,616.3 751.9,616.3 781.5,598.7 781.5,616.3" fill="#ff0a0a"/>
<polygon points="781.5,616.3 781.5,608.3 807.3,589.3 807.3,616.3" fill="#ff0a0a"/>
<polygon points="807.3,616.3 807.3,598.1 814.7,598.1 814.7,616.3" fill="#ff0a0a"/>
<polygon points="814.7,616.3 814.7,587.9 840.5,608.3 840.5,616.3" fill="#ff0a0a"/>
<polygon points="840.5,616.3 840.5,601.0 870.1,616.3 870.1,616.3" fill="#ff0a0a"/>
<polygon points="958.8,616.3 958.8,616.3 984.6,610.8 984.6,616.3" fill="#ff0a0a"/>
<polygon points="984.6,616.3 984.6,616.0 992.0,616.0 992.0,616.3" fill="#ff0a0a"/>
<polygon points="992.0,616.3 992.0,614.3 995.4,614.3 995.4,616.3" fill="#ff0a0a"/>
</g>
<line x1="448.5" y1="607.8" x2="486.0" y2="607.8" stroke="#0000ff" stroke-opacity="0.66" stroke-width="1.5"/>
<line x1="574.6" y1="607.8" x2="869.9" y2="607.8" stroke="#0000ff" stroke-opacity="0.66" stroke-width="1.5"/>
<line x1="958.8" y1="607.8" x2="995.6" y2="607.8" stroke="#0000ff" stroke-opacity="0.66" stroke-width="1.5"/>
<line x1="448.5" y1="626.9" x2="604.0" y2="626.9" stroke="#0000ff" stroke-opacity="0.66" stroke-width="1.5"/>
<line x1="663.4" y1="626.9" x2="781.2" y2="626.9" stroke="#0000ff" stroke-opacity="0.66" stroke-width="1.5"/>
<line x1="840.6" y1="626.9" x2="995.6" y2="626.9" stroke="#0000ff" stroke-opacity="0.66" stroke-width="1.5"/>
<g stroke="#921c1c" stroke-width="1.25" stroke-linejoin="round">
<polygon points="449.3,705.0 449.3,707.0 456.4,708.2 456.4,705.0" fill="#ffff00"/>
<polygon points="456.4,705.0 456.4,708.2 485.9,715.2 485.9,705.0" fill="#ffff00"/>
<polygon points="485.9,705.0 485.9,715.2 515.5,720.7 515.5,705.0" fill="#ffff00"/>
<polygon points="515.5,705.0 515.5,720.7 545.0,720.2 545.0,705.0" fill="#ffff00"/>
<polygon points="545.0,705.0 545.0,720.7 574.6,714.6 574.6,705.0" fill="#ffff00"/>
<polygon points="574.6,705.0 574.6,714.6 604.1,705.0 604.1,705.0" fill="#ffff00"/>
<polygon points="663.2,705.0 663.2,705.0 692.8,707.5 692.8,705.0" fill="#ffff00"/>
<polygon points="692.8,705.0 692.8,707.5 722.3,709.2 722.3,705.0" fill="#ffff00"/>
<polygon points="722.3,705.0 722.3,709.2 751.9,707.5 751.9,705.0" fill="#ffff00"/>
<polygon points="751.9,705.0 751.9,707.5 781.5,705.0 781.5,705.0" fill="#ffff00"/>
<polygon points="840.5,705.0 840.5,705.0 870.1,714.6 870.1,705.0" fill="#ffff00"/>
<polygon points="870.1,705.0 870.1,714.6 899.6,720.7 899.6,705.0" fill="#ffff00"/>
<polygon points="899.6,705.0 899.6,720.2 929.2,720.7 929.2,705.0" fill="#ffff00"/>
<polygon points="929.2,705.0 929.2,720.7 958.8,715.2 958.8,705.0" fill="#ffff00"/>
<polygon points="958.8,705.0 958.8,715.2 988.3,708.2 988.3,705.0" fill="#ffff00"/>
<polygon points="988.3,705.0 988.3,708.2 995.4,707.0 995.4,705.0" fill="#ffff00"/>
<polygon points="574.6,705.0 574.6,705.0 604.1,703.0 604.1,705.0" fill="#ff0a0a"/>
<polygon points="604.1,705.0 604.1,703.0 633.7,701.7 633.7,705.0" fill="#ff0a0a"/>
<polygon points="633.7,705.0 633.7,701.7 663.2,703.0 663.2,705.0" fill="#ff0a0a"/>
<polygon points="663.2,705.0 663.2,703.0 692.8,705.0 692.8,705.0" fill="#ff0a0a"/>
<polygon points="751.9,705.0 751.9,705.0 781.5,703.0 781.5,705.0" fill="#ff0a0a"/>
<polygon points="781.5,705.0 781.5,703.0 811.0,701.7 811.0,705.0" fill="#ff0a0a"/>
<polygon points="811.0,705.0 811.0,701.7 840.5,703.0 840.5,705.0" fill="#ff0a0a"/>
<polygon points="840.5,705.0 840.5,703.0 870.1,705.0 870.1,705.0" fill="#ff0a0a"/>
</g>
<line x1="448.5" y1="696.5" x2="486.0" y2="696.5" stroke="#0000ff" stroke-opacity="0.66" stroke-width="1.5"/>
<line x1="574.6" y1="696.5" x2="692.6" y2="696.5" stroke="#0000ff" stroke-opacity="0.66" stroke-width="1.5"/>
<line x1="752.0" y1="696.5" x2="869.9" y2="696.5" stroke="#0000ff" stroke-opacity="0.66" stroke-width="1.5"/>
<line x1="958.8" y1="696.5" x2="995.6" y2="696.5" stroke="#0000ff" stroke-opacity="0.66" stroke-width="1.5"/>
<line x1="448.5" y1="715.6" x2="633.0" y2="715.6" stroke="#0000ff" stroke-opacity="0.66" stroke-width="1.5"/>
<line x1="663.6" y1="715.6" x2="781.2" y2="715.6" stroke="#0000ff" stroke-opacity="0.66" stroke-width="1.5"/>
<line x1="811.3" y1="715.6" x2="995.6" y2="715.6" stroke="#0000ff" stroke-opacity="0.66" stroke-width="1.5"/>
<rect x="452.2" y="789.5" width="8.4" height="8.2" fill="#4866c6" stroke="#3a50a8" stroke-width="0.8"/>
<rect x="629.5" y="789.5" width="8.4" height="8.2" fill="#4866c6" stroke="#3a50a8" stroke-width="0.8"/>
<rect x="806.8" y="789.5" width="8.4" height="8.2" fill="#4866c6" stroke="#3a50a8" stroke-width="0.8"/>
<rect x="984.1" y="789.5" width="8.4" height="8.2" fill="#4866c6" stroke="#3a50a8" stroke-width="0.8"/>
<g stroke="#921c1c" stroke-width="1.25" stroke-linejoin="round">
<polygon points="449.3,793.6 449.3,794.8 452.7,794.8 452.7,793.6" fill="#ffff00"/>
<polygon points="460.1,793.6 460.1,793.6 485.9,798.6 485.9,793.6" fill="#ffff00"/>
<polygon points="485.9,793.6 485.9,801.6 515.5,810.6 515.5,793.6" fill="#ffff00"/>
<polygon points="515.5,793.6 515.5,809.8 545.0,811.3 545.0,793.6" fill="#ffff00"/>
<polygon points="545.0,793.6 545.0,811.6 574.6,804.6 574.6,793.6" fill="#ffff00"/>
<polygon points="574.6,793.6 574.6,804.6 601.9,793.6 601.9,793.6" fill="#ffff00"/>
<polygon points="670.6,793.6 670.6,793.6 692.8,798.1 692.8,793.6" fill="#ffff00"/>
<polygon points="692.8,793.6 692.8,798.1 722.3,800.6 722.3,793.6" fill="#ffff00"/>
<polygon points="722.3,793.6 722.3,800.6 751.9,798.1 751.9,793.6" fill="#ffff00"/>
<polygon points="751.9,793.6 751.9,798.1 774.1,793.6 774.1,793.6" fill="#ffff00"/>
<polygon points="842.8,793.6 842.8,793.6 870.1,804.6 870.1,793.6" fill="#ffff00"/>
<polygon points="870.1,793.6 870.1,804.6 899.6,811.6 899.6,793.6" fill="#ffff00"/>
<polygon points="899.6,793.6 899.6,811.3 929.2,809.8 929.2,793.6" fill="#ffff00"/>
<polygon points="929.2,793.6 929.2,810.6 958.8,801.6 958.8,793.6" fill="#ffff00"/>
<polygon points="958.8,793.6 958.8,798.6 984.6,793.6 984.6,793.6" fill="#ffff00"/>
<polygon points="992.0,793.6 992.0,794.8 995.4,794.8 995.4,793.6" fill="#ffff00"/>
<polygon points="449.3,793.6 449.3,792.0 452.7,792.0 452.7,793.6" fill="#ff0a0a"/>
<polygon points="452.7,793.6 452.7,793.3 460.1,793.3 460.1,793.6" fill="#ff0a0a"/>
<polygon points="460.1,793.6 460.1,789.1 485.9,793.6 485.9,793.6" fill="#ff0a0a"/>
<polygon points="574.6,793.6 574.6,793.6 604.1,779.8 604.1,793.6" fill="#ff0a0a"/>
<polygon points="604.1,793.6 604.1,786.0 630.0,773.6 630.0,793.6" fill="#ff0a0a"/>
<polygon points="630.0,793.6 630.0,781.3 637.4,781.3 637.4,793.6" fill="#ff0a0a"/>
<polygon points="637.4,793.6 637.4,774.6 663.2,786.0 663.2,793.6" fill="#ff0a0a"/>
<polygon points="663.2,793.6 663.2,779.7 692.8,793.6 692.8,793.6" fill="#ff0a0a"/>
<polygon points="751.9,793.6 751.9,793.6 781.5,779.7 781.5,793.6" fill="#ff0a0a"/>
<polygon points="781.5,793.6 781.5,786.0 807.3,774.6 807.3,793.6" fill="#ff0a0a"/>
<polygon points="807.3,793.6 807.3,781.3 814.7,781.3 814.7,793.6" fill="#ff0a0a"/>
<polygon points="814.7,793.6 814.7,773.6 840.5,786.0 840.5,793.6" fill="#ff0a0a"/>
<polygon points="840.5,793.6 840.5,779.8 870.1,793.6 870.1,793.6" fill="#ff0a0a"/>
<polygon points="958.8,793.6 958.8,793.6 984.6,789.1 984.6,793.6" fill="#ff0a0a"/>
<polygon points="984.6,793.6 984.6,793.3 992.0,793.3 992.0,793.6" fill="#ff0a0a"/>
<polygon points="992.0,793.6 992.0,792.0 995.4,792.0 995.4,793.6" fill="#ff0a0a"/>
</g>
<line x1="448.5" y1="785.1" x2="486.0" y2="785.1" stroke="#0000ff" stroke-opacity="0.66" stroke-width="1.5"/>
<line x1="574.6" y1="785.1" x2="692.6" y2="785.1" stroke="#0000ff" stroke-opacity="0.66" stroke-width="1.5"/>
<line x1="752.0" y1="785.1" x2="869.9" y2="785.1" stroke="#0000ff" stroke-opacity="0.66" stroke-width="1.5"/>
<line x1="958.8" y1="785.1" x2="995.6" y2="785.1" stroke="#0000ff" stroke-opacity="0.66" stroke-width="1.5"/>
<line x1="448.5" y1="804.2" x2="637.0" y2="804.2" stroke="#0000ff" stroke-opacity="0.66" stroke-width="1.5"/>
<line x1="663.6" y1="804.2" x2="781.2" y2="804.2" stroke="#0000ff" stroke-opacity="0.66" stroke-width="1.5"/>
<line x1="807.6" y1="804.2" x2="995.6" y2="804.2" stroke="#0000ff" stroke-opacity="0.66" stroke-width="1.5"/>
<line x1="456.4" y1="240" x2="456.4" y2="793.6" stroke="#909090" stroke-opacity="0.14" stroke-width="1"/>
<line x1="633.7" y1="240" x2="633.7" y2="793.6" stroke="#909090" stroke-opacity="0.14" stroke-width="1"/>
<line x1="811.0" y1="240" x2="811.0" y2="793.6" stroke="#909090" stroke-opacity="0.14" stroke-width="1"/>
<line x1="988.3" y1="240" x2="988.3" y2="793.6" stroke="#909090" stroke-opacity="0.14" stroke-width="1"/>
<g fill="none" stroke="#20ee20" stroke-width="1.7"><path d="M456.4 793.6 V748.4 M451.2 758.4 L456.4 748.4 L461.6 758.4"/></g>
<g fill="none" stroke="#44ee44" stroke-width="3" stroke-linecap="round"><path d="M451 736.8 H458 M458 736.8 L465 731 M458 736.8 L465 742.8"/></g>
<g fill="none" stroke="#ff1010" stroke-width="1.6"><path d="M456.4 793.6 H501.8 M491.6 788.4 L501.8 793.6 L491.6 798.8"/></g>
<g fill="none" stroke="#ff2a2a" stroke-width="2.3" stroke-linecap="round"><path d="M507.6 785.2 L519.4 799.4 M519.2 785.2 L507.8 799.4"/></g>
<text x="459.9" y="261.3" font-size="12.4" fill="#101010" fill-opacity="0.95" stroke="#101010" stroke-opacity="0.8" stroke-width="0.7" textLength="26.6" lengthAdjust="spacingAndGlyphs">0.118</text>
<text x="544.8" y="275.1" font-size="12.4" fill="#101010" fill-opacity="0.95" stroke="#101010" stroke-opacity="0.8" stroke-width="0.7" textLength="32.4" lengthAdjust="spacingAndGlyphs">0.3602</text>
<text x="616.3" y="261.3" font-size="12.4" fill="#101010" fill-opacity="0.95" stroke="#101010" stroke-opacity="0.8" stroke-width="0.7" textLength="32.4" lengthAdjust="spacingAndGlyphs">0.4078</text>
<text x="721.7" y="275.1" font-size="12.4" fill="#101010" fill-opacity="0.95" stroke="#101010" stroke-opacity="0.8" stroke-width="0.7" textLength="32.4" lengthAdjust="spacingAndGlyphs">0.1437</text>
<text x="811.8" y="261.3" font-size="12.4" fill="#101010" fill-opacity="0.95" stroke="#101010" stroke-opacity="0.8" stroke-width="0.7" textLength="32.4" lengthAdjust="spacingAndGlyphs">0.4078</text>
<text x="898.8" y="275.1" font-size="12.4" fill="#101010" fill-opacity="0.95" stroke="#101010" stroke-opacity="0.8" stroke-width="0.7" textLength="32.4" lengthAdjust="spacingAndGlyphs">0.3602</text>
<text x="973.3" y="261.3" font-size="12.4" fill="#101010" fill-opacity="0.95" stroke="#101010" stroke-opacity="0.8" stroke-width="0.7" textLength="26.6" lengthAdjust="spacingAndGlyphs">0.118</text>
<text x="433.0" y="350.0" font-size="12.4" fill="#101010" fill-opacity="0.95" stroke="#101010" stroke-opacity="0.8" stroke-width="0.7" textLength="32.4" lengthAdjust="spacingAndGlyphs">0.0204</text>
<text x="514.8" y="363.8" font-size="12.4" fill="#101010" fill-opacity="0.95" stroke="#101010" stroke-opacity="0.8" stroke-width="0.7" textLength="32.4" lengthAdjust="spacingAndGlyphs">0.3064</text>
<text x="635.4" y="350.0" font-size="12.4" fill="#101010" fill-opacity="0.95" stroke="#101010" stroke-opacity="0.8" stroke-width="0.7" textLength="26.6" lengthAdjust="spacingAndGlyphs">0.065</text>
<text x="721.7" y="363.8" font-size="12.4" fill="#101010" fill-opacity="0.95" stroke="#101010" stroke-opacity="0.8" stroke-width="0.7" textLength="32.4" lengthAdjust="spacingAndGlyphs">0.0857</text>
<text x="812.9" y="350.0" font-size="12.4" fill="#101010" fill-opacity="0.95" stroke="#101010" stroke-opacity="0.8" stroke-width="0.7" textLength="26.6" lengthAdjust="spacingAndGlyphs">0.065</text>
<text x="928.8" y="363.8" font-size="12.4" fill="#101010" fill-opacity="0.95" stroke="#101010" stroke-opacity="0.8" stroke-width="0.7" textLength="32.4" lengthAdjust="spacingAndGlyphs">0.3064</text>
<text x="979.8" y="350.0" font-size="12.4" fill="#101010" fill-opacity="0.95" stroke="#101010" stroke-opacity="0.8" stroke-width="0.7" textLength="32.4" lengthAdjust="spacingAndGlyphs">0.0204</text>
<text x="457.7" y="438.6" font-size="12.4" fill="#101010" fill-opacity="0.95" stroke="#101010" stroke-opacity="0.8" stroke-width="0.7" textLength="32.4" lengthAdjust="spacingAndGlyphs">0.1333</text>
<text x="514.4" y="452.4" font-size="12.4" fill="#101010" fill-opacity="0.95" stroke="#101010" stroke-opacity="0.8" stroke-width="0.7" textLength="32.4" lengthAdjust="spacingAndGlyphs">0.3525</text>
<text x="616.2" y="438.6" font-size="12.4" fill="#101010" fill-opacity="0.95" stroke="#101010" stroke-opacity="0.8" stroke-width="0.7" textLength="32.4" lengthAdjust="spacingAndGlyphs">0.5836</text>
<text x="721.8" y="452.4" font-size="12.4" fill="#101010" fill-opacity="0.95" stroke="#101010" stroke-opacity="0.8" stroke-width="0.7" textLength="32.4" lengthAdjust="spacingAndGlyphs">0.1002</text>
<text x="811.2" y="438.6" font-size="12.4" fill="#101010" fill-opacity="0.95" stroke="#101010" stroke-opacity="0.8" stroke-width="0.7" textLength="32.4" lengthAdjust="spacingAndGlyphs">0.5836</text>
<text x="928.3" y="452.4" font-size="12.4" fill="#101010" fill-opacity="0.95" stroke="#101010" stroke-opacity="0.8" stroke-width="0.7" textLength="32.4" lengthAdjust="spacingAndGlyphs">0.3525</text>
<text x="970.5" y="438.6" font-size="12.4" fill="#101010" fill-opacity="0.95" stroke="#101010" stroke-opacity="0.8" stroke-width="0.7" textLength="32.4" lengthAdjust="spacingAndGlyphs">0.1333</text>
<text x="433.0" y="527.3" font-size="12.4" fill="#101010" fill-opacity="0.95" stroke="#101010" stroke-opacity="0.8" stroke-width="0.7" textLength="32.4" lengthAdjust="spacingAndGlyphs">0.0218</text>
<text x="514.8" y="541.1" font-size="12.4" fill="#101010" fill-opacity="0.95" stroke="#101010" stroke-opacity="0.8" stroke-width="0.7" textLength="32.4" lengthAdjust="spacingAndGlyphs">0.3291</text>
<text x="632.5" y="527.3" font-size="12.4" fill="#101010" fill-opacity="0.95" stroke="#101010" stroke-opacity="0.8" stroke-width="0.7" textLength="32.4" lengthAdjust="spacingAndGlyphs">0.1608</text>
<text x="721.8" y="541.1" font-size="12.4" fill="#101010" fill-opacity="0.95" stroke="#101010" stroke-opacity="0.8" stroke-width="0.7" textLength="32.4" lengthAdjust="spacingAndGlyphs">0.0582</text>
<text x="810.0" y="527.3" font-size="12.4" fill="#101010" fill-opacity="0.95" stroke="#101010" stroke-opacity="0.8" stroke-width="0.7" textLength="32.4" lengthAdjust="spacingAndGlyphs">0.1608</text>
<text x="928.8" y="541.1" font-size="12.4" fill="#101010" fill-opacity="0.95" stroke="#101010" stroke-opacity="0.8" stroke-width="0.7" textLength="32.4" lengthAdjust="spacingAndGlyphs">0.3291</text>
<text x="979.8" y="527.3" font-size="12.4" fill="#101010" fill-opacity="0.95" stroke="#101010" stroke-opacity="0.8" stroke-width="0.7" textLength="32.4" lengthAdjust="spacingAndGlyphs">0.0218</text>
<text x="457.7" y="615.9" font-size="12.4" fill="#101010" fill-opacity="0.95" stroke="#101010" stroke-opacity="0.8" stroke-width="0.7" textLength="32.4" lengthAdjust="spacingAndGlyphs">0.1333</text>
<text x="514.4" y="629.7" font-size="12.4" fill="#101010" fill-opacity="0.95" stroke="#101010" stroke-opacity="0.8" stroke-width="0.7" textLength="32.4" lengthAdjust="spacingAndGlyphs">0.3525</text>
<text x="616.2" y="615.9" font-size="12.4" fill="#101010" fill-opacity="0.95" stroke="#101010" stroke-opacity="0.8" stroke-width="0.7" textLength="32.4" lengthAdjust="spacingAndGlyphs">0.5836</text>
<text x="721.8" y="629.7" font-size="12.4" fill="#101010" fill-opacity="0.95" stroke="#101010" stroke-opacity="0.8" stroke-width="0.7" textLength="32.4" lengthAdjust="spacingAndGlyphs">0.1002</text>
<text x="811.2" y="615.9" font-size="12.4" fill="#101010" fill-opacity="0.95" stroke="#101010" stroke-opacity="0.8" stroke-width="0.7" textLength="32.4" lengthAdjust="spacingAndGlyphs">0.5836</text>
<text x="928.3" y="629.7" font-size="12.4" fill="#101010" fill-opacity="0.95" stroke="#101010" stroke-opacity="0.8" stroke-width="0.7" textLength="32.4" lengthAdjust="spacingAndGlyphs">0.3525</text>
<text x="970.5" y="615.9" font-size="12.4" fill="#101010" fill-opacity="0.95" stroke="#101010" stroke-opacity="0.8" stroke-width="0.7" textLength="32.4" lengthAdjust="spacingAndGlyphs">0.1333</text>
<text x="433.0" y="704.6" font-size="12.4" fill="#101010" fill-opacity="0.95" stroke="#101010" stroke-opacity="0.8" stroke-width="0.7" textLength="32.4" lengthAdjust="spacingAndGlyphs">0.0204</text>
<text x="514.8" y="718.4" font-size="12.4" fill="#101010" fill-opacity="0.95" stroke="#101010" stroke-opacity="0.8" stroke-width="0.7" textLength="32.4" lengthAdjust="spacingAndGlyphs">0.3064</text>
<text x="635.4" y="704.6" font-size="12.4" fill="#101010" fill-opacity="0.95" stroke="#101010" stroke-opacity="0.8" stroke-width="0.7" textLength="26.6" lengthAdjust="spacingAndGlyphs">0.065</text>
<text x="721.7" y="718.4" font-size="12.4" fill="#101010" fill-opacity="0.95" stroke="#101010" stroke-opacity="0.8" stroke-width="0.7" textLength="32.4" lengthAdjust="spacingAndGlyphs">0.0857</text>
<text x="812.9" y="704.6" font-size="12.4" fill="#101010" fill-opacity="0.95" stroke="#101010" stroke-opacity="0.8" stroke-width="0.7" textLength="26.6" lengthAdjust="spacingAndGlyphs">0.065</text>
<text x="928.8" y="718.4" font-size="12.4" fill="#101010" fill-opacity="0.95" stroke="#101010" stroke-opacity="0.8" stroke-width="0.7" textLength="32.4" lengthAdjust="spacingAndGlyphs">0.3064</text>
<text x="979.8" y="704.6" font-size="12.4" fill="#101010" fill-opacity="0.95" stroke="#101010" stroke-opacity="0.8" stroke-width="0.7" textLength="32.4" lengthAdjust="spacingAndGlyphs">0.0204</text>
<text x="459.9" y="793.2" font-size="12.4" fill="#101010" fill-opacity="0.95" stroke="#101010" stroke-opacity="0.8" stroke-width="0.7" textLength="26.6" lengthAdjust="spacingAndGlyphs">0.118</text>
<text x="544.8" y="807.0" font-size="12.4" fill="#101010" fill-opacity="0.95" stroke="#101010" stroke-opacity="0.8" stroke-width="0.7" textLength="32.4" lengthAdjust="spacingAndGlyphs">0.3602</text>
<text x="616.3" y="793.2" font-size="12.4" fill="#101010" fill-opacity="0.95" stroke="#101010" stroke-opacity="0.8" stroke-width="0.7" textLength="32.4" lengthAdjust="spacingAndGlyphs">0.4078</text>
<text x="721.7" y="807.0" font-size="12.4" fill="#101010" fill-opacity="0.95" stroke="#101010" stroke-opacity="0.8" stroke-width="0.7" textLength="32.4" lengthAdjust="spacingAndGlyphs">0.1437</text>
<text x="811.8" y="793.2" font-size="12.4" fill="#101010" fill-opacity="0.95" stroke="#101010" stroke-opacity="0.8" stroke-width="0.7" textLength="32.4" lengthAdjust="spacingAndGlyphs">0.4078</text>
<text x="898.8" y="807.0" font-size="12.4" fill="#101010" fill-opacity="0.95" stroke="#101010" stroke-opacity="0.8" stroke-width="0.7" textLength="32.4" lengthAdjust="spacingAndGlyphs">0.3602</text>
<text x="973.3" y="793.2" font-size="12.4" fill="#101010" fill-opacity="0.95" stroke="#101010" stroke-opacity="0.8" stroke-width="0.7" textLength="26.6" lengthAdjust="spacingAndGlyphs">0.118</text>
<rect x="387.50" y="817" width="41.02" height="25" fill="#cc00cc"/>
<line x1="387.50" y1="817" x2="428.22" y2="842" stroke="#fff" stroke-opacity="0.22" stroke-width="0.9"/>
<rect x="428.22" y="817" width="41.02" height="25" fill="#e0006a"/>
<line x1="428.22" y1="817" x2="468.94" y2="842" stroke="#fff" stroke-opacity="0.22" stroke-width="0.9"/>
<rect x="468.94" y="817" width="41.02" height="25" fill="#ff0000"/>
<line x1="468.94" y1="817" x2="509.66" y2="842" stroke="#fff" stroke-opacity="0.22" stroke-width="0.9"/>
<rect x="509.66" y="817" width="41.02" height="25" fill="#ff4800"/>
<line x1="509.66" y1="817" x2="550.38" y2="842" stroke="#fff" stroke-opacity="0.22" stroke-width="0.9"/>
<rect x="550.38" y="817" width="41.02" height="25" fill="#ff8000"/>
<line x1="550.38" y1="817" x2="591.10" y2="842" stroke="#fff" stroke-opacity="0.22" stroke-width="0.9"/>
<rect x="591.10" y="817" width="41.02" height="25" fill="#ffa500"/>
<line x1="591.10" y1="817" x2="631.82" y2="842" stroke="#fff" stroke-opacity="0.22" stroke-width="0.9"/>
<rect x="631.82" y="817" width="41.02" height="25" fill="#ffd000"/>
<line x1="631.82" y1="817" x2="672.54" y2="842" stroke="#fff" stroke-opacity="0.22" stroke-width="0.9"/>
<rect x="672.54" y="817" width="41.02" height="25" fill="#ffff00"/>
<line x1="672.54" y1="817" x2="713.26" y2="842" stroke="#fff" stroke-opacity="0.22" stroke-width="0.9"/>
<rect x="713.26" y="817" width="41.02" height="25" fill="#80ff00"/>
<line x1="713.26" y1="817" x2="753.98" y2="842" stroke="#fff" stroke-opacity="0.22" stroke-width="0.9"/>
<rect x="753.98" y="817" width="41.02" height="25" fill="#00f000"/>
<line x1="753.98" y1="817" x2="794.70" y2="842" stroke="#fff" stroke-opacity="0.22" stroke-width="0.9"/>
<rect x="794.70" y="817" width="41.02" height="25" fill="#00ff80"/>
<line x1="794.70" y1="817" x2="835.42" y2="842" stroke="#fff" stroke-opacity="0.22" stroke-width="0.9"/>
<rect x="835.42" y="817" width="41.02" height="25" fill="#00ffff"/>
<line x1="835.42" y1="817" x2="876.14" y2="842" stroke="#fff" stroke-opacity="0.22" stroke-width="0.9"/>
<rect x="876.14" y="817" width="41.02" height="25" fill="#00a0ff"/>
<line x1="876.14" y1="817" x2="916.86" y2="842" stroke="#fff" stroke-opacity="0.22" stroke-width="0.9"/>
<rect x="916.86" y="817" width="41.02" height="25" fill="#0050ff"/>
<line x1="916.86" y1="817" x2="957.58" y2="842" stroke="#fff" stroke-opacity="0.22" stroke-width="0.9"/>
<rect x="957.58" y="817" width="40.72" height="25" fill="#0000ff"/>
<line x1="957.58" y1="817" x2="998.30" y2="842" stroke="#fff" stroke-opacity="0.22" stroke-width="0.9"/>
<text x="428.7" y="836" font-size="16.5" fill="#181818" fill-opacity="0.88" text-anchor="middle">-150</text>
<text x="469.4" y="836" font-size="16.5" fill="#181818" fill-opacity="0.88" text-anchor="middle">-135</text>
<text x="510.2" y="836" font-size="16.5" fill="#181818" fill-opacity="0.88" text-anchor="middle">-120</text>
<text x="550.9" y="836" font-size="16.5" fill="#181818" fill-opacity="0.88" text-anchor="middle">-105</text>
<text x="591.6" y="836" font-size="16.5" fill="#181818" fill-opacity="0.88" text-anchor="middle">-90</text>
<text x="632.3" y="836" font-size="16.5" fill="#181818" fill-opacity="0.88" text-anchor="middle">-75</text>
<text x="673.0" y="836" font-size="16.5" fill="#181818" fill-opacity="0.88" text-anchor="middle">-60</text>
<text x="713.8" y="836" font-size="16.5" fill="#181818" fill-opacity="0.88" text-anchor="middle">-45</text>
<text x="754.5" y="836" font-size="16.5" fill="#181818" fill-opacity="0.88" text-anchor="middle">-30</text>
<text x="795.2" y="836" font-size="16.5" fill="#181818" fill-opacity="0.88" text-anchor="middle">-15</text>
<text x="835.9" y="836" font-size="16.5" fill="#181818" fill-opacity="0.88" text-anchor="middle">0</text>
<text x="876.6" y="836" font-size="16.5" fill="#181818" fill-opacity="0.88" text-anchor="middle">15</text>
<text x="917.4" y="836" font-size="16.5" fill="#181818" fill-opacity="0.88" text-anchor="middle">30</text>
<text x="947.7" y="836" font-size="16.5" fill="#181818" fill-opacity="0.88" text-anchor="middle">45</text>
</svg>
</body></html>
